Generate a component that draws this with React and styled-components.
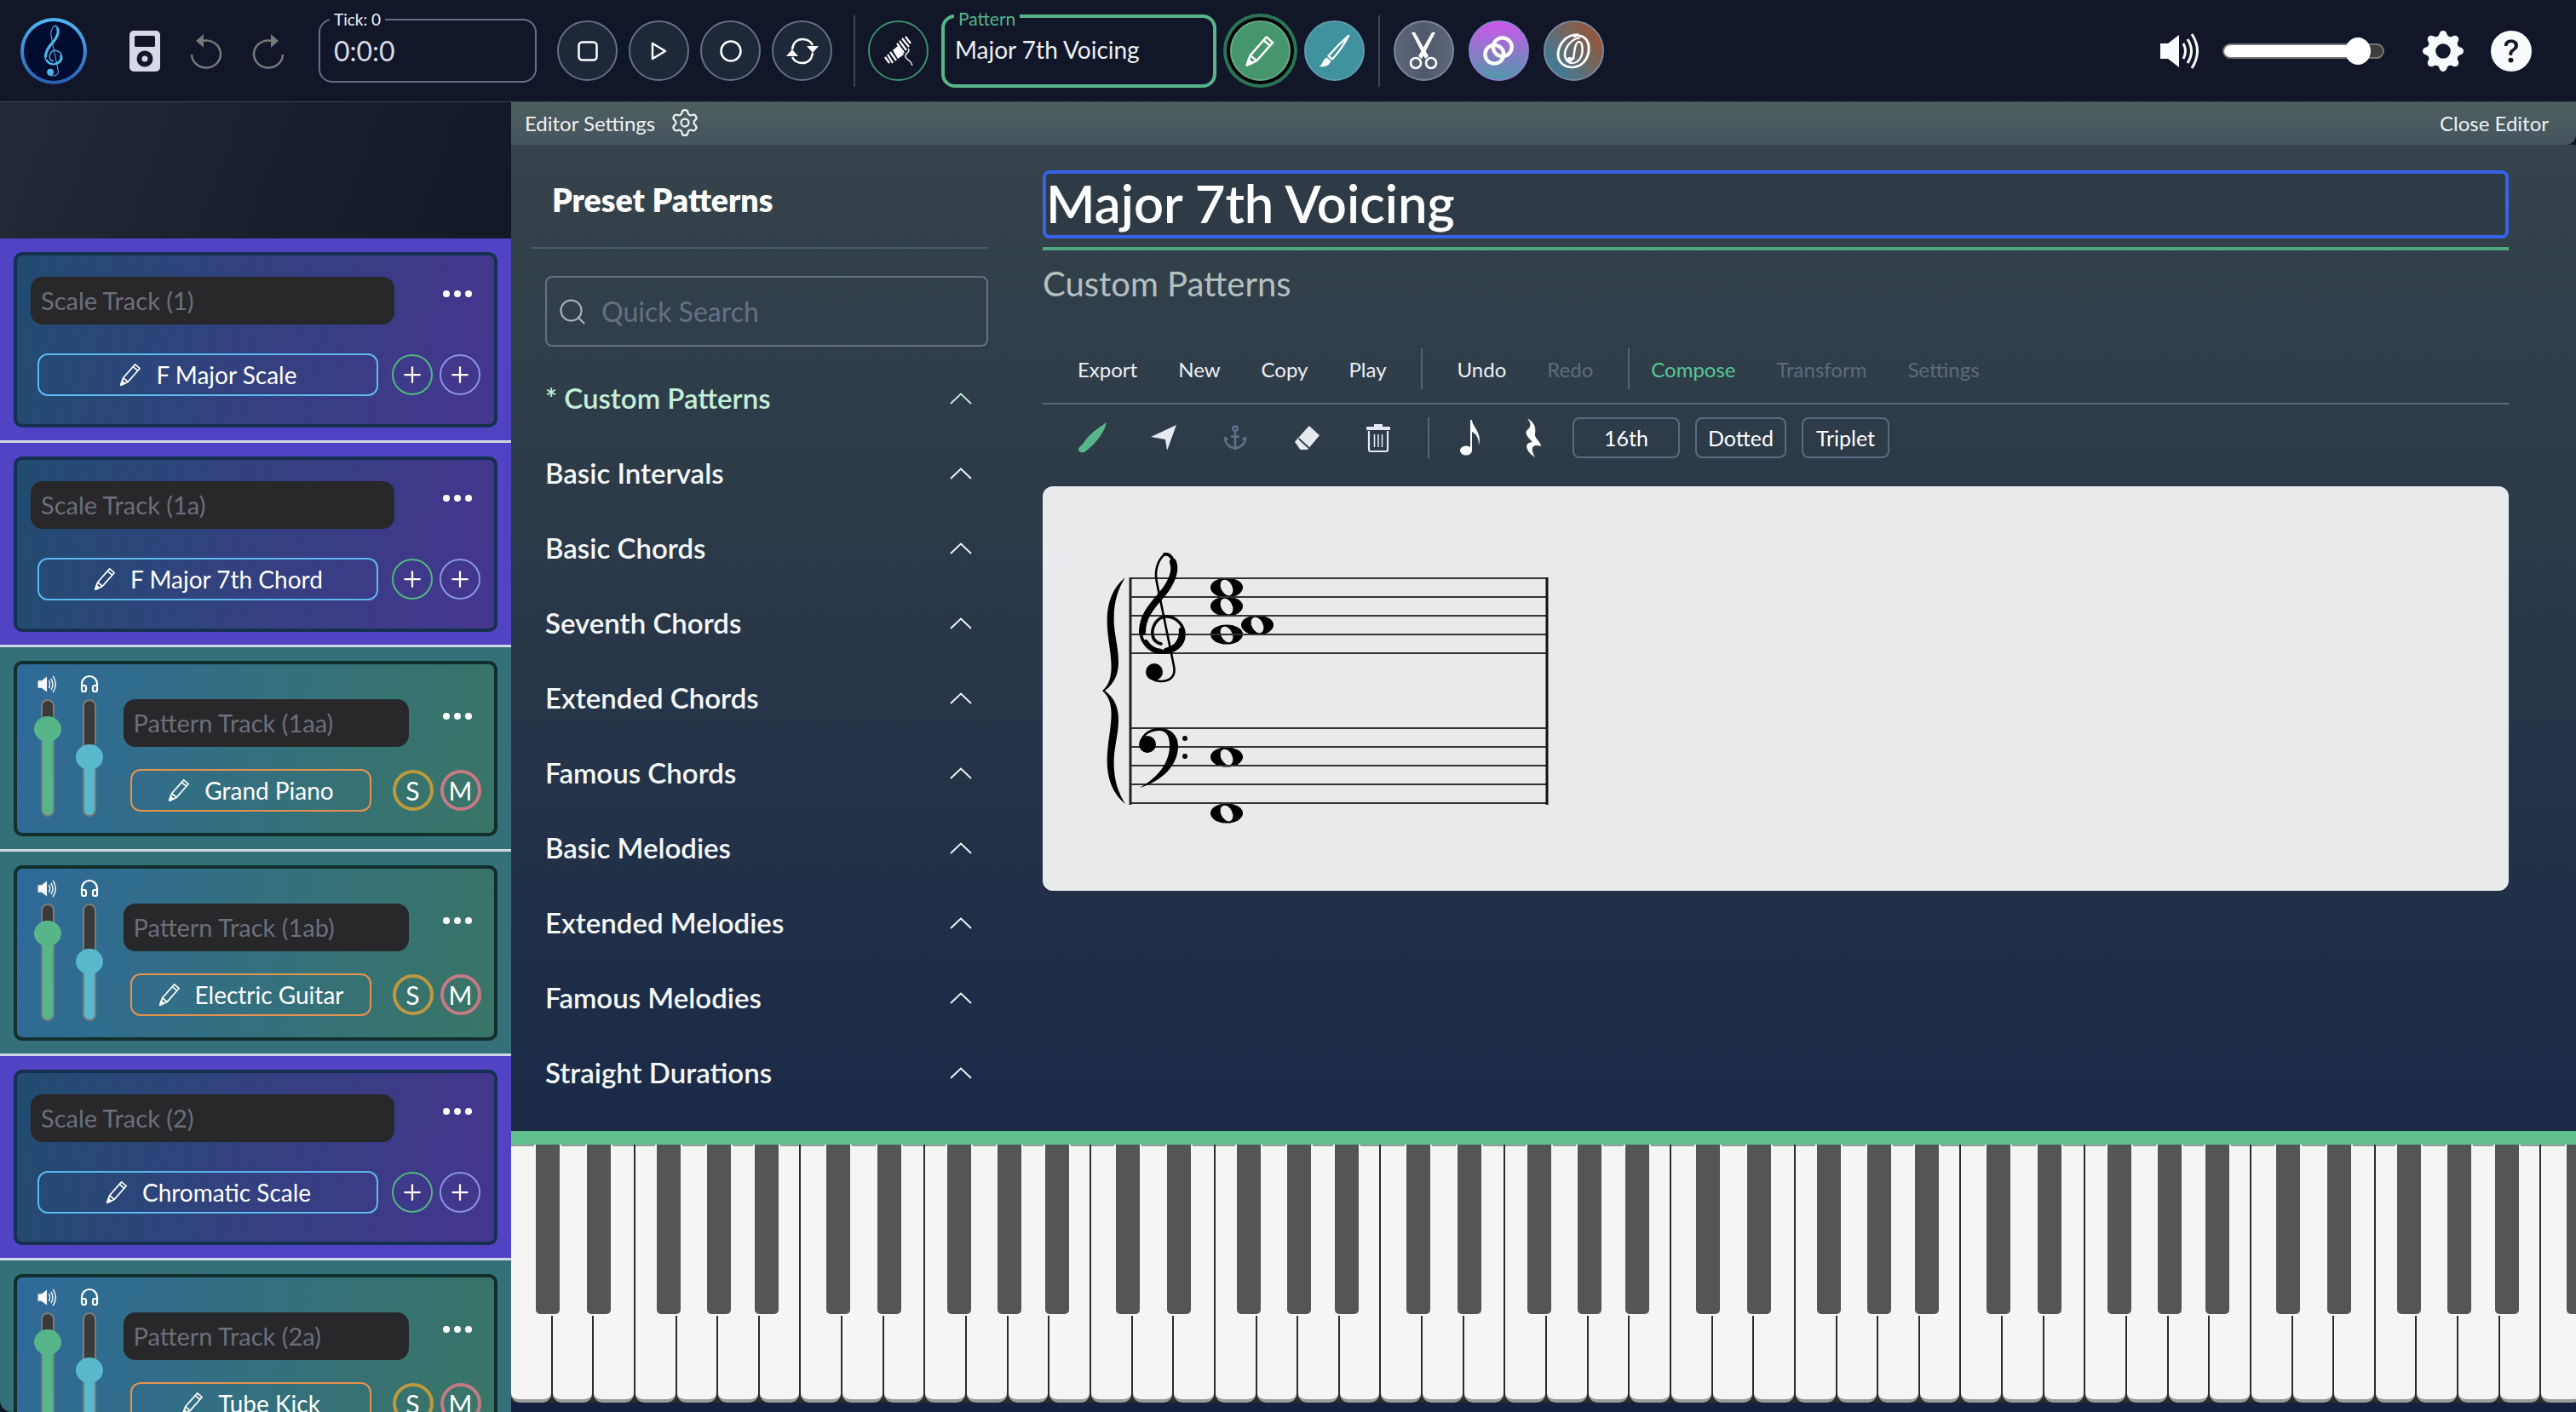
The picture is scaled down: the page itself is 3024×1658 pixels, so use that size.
import React from "react"
import styled, { createGlobalStyle } from "styled-components"
import { Search, Anchor, Plus, Headphones, Settings } from "lucide-react"
import { BsGearFill, BsQuestionCircleFill } from "react-icons/bs"

const GlobalStyle = createGlobalStyle`
	html, body { margin: 0; padding: 0; background: #111729; }
	* { box-sizing: border-box; }
	body { font-family: "Lato", "Noto Sans", sans-serif; color: #fff; }
`

const Page = styled.div`
	width: 3024px;
	height: 1658px;
	overflow: hidden;
	display: flex;
	flex-direction: column;
`

const TopBar = styled.header`
	height: 120px;
	flex: none;
	display: flex;
	align-items: center;
	padding: 0 52px 0 24px;
	background: #111729;
	border-bottom: 1px solid #3a4252;
`

const Group = styled.div`
	display: flex;
	align-items: center;
	gap: ${p => p.$gap || 0}px;
	margin-left: ${p => p.$left || 0}px;
`

const RightGroup = styled(Group)`
	margin-left: auto;
`

const BarDivider = styled.div`
	width: 2px;
	height: 84px;
	background: #3f4759;
	margin-left: ${p => p.$left}px;
`

const LogoBadge = styled.div`
	width: 78px;
	height: 78px;
	border-radius: 50%;
	padding: 4px;
	background: linear-gradient(180deg, #4fb8f5, #2a5fb0);
	flex: none;
	div {
		width: 100%;
		height: 100%;
		border-radius: 50%;
		background: #020b30;
		display: flex;
		align-items: center;
		justify-content: center;
	}
`

const FieldBox = styled.div`
	position: relative;
	width: ${p => p.$w}px;
	height: ${p => p.$h}px;
	margin-left: ${p => p.$left}px;
	border: ${p => (p.$active ? "4px solid #57b58a" : "2.5px solid #667085")};
	border-radius: 16px;
	padding-left: ${p => p.$pad}px;
	display: flex;
	align-items: center;
	background: #111729;
`

const FieldLabel = styled.span`
	position: absolute;
	left: 11px;
	top: ${p => (p.$active ? -10 : -12)}px;
	padding: 0 5px;
	background: #111729;
	font-size: ${p => (p.$active ? 21 : 19)}px;
	line-height: 22px;
	color: ${p => (p.$active ? "#57b58a" : "#eef0f4")};
`

const FieldValue = styled.span`
	font-size: ${p => p.$size}px;
	color: ${p => p.$color};
	margin-top: ${p => p.$up || 0}px;
`

const RoundButton = styled.div`
	width: 71px;
	height: 71px;
	flex: none;
	border-radius: 50%;
	display: flex;
	align-items: center;
	justify-content: center;
	margin-left: ${p => p.$left || 0}px;
	border: 2.5px solid ${p => p.$border || "#667085"};
	background: ${p => p.$bg || "#1d2939"};
	box-shadow: ${p => (p.$ring ? "0 0 0 4px #000, 0 0 0 8px #2b7557" : "none")};
`

const VolumeTrack = styled.div`
	position: relative;
	width: 190px;
	height: 18px;
	margin-left: 24px;
	border-radius: 9px;
	border: 2px solid #777;
	background: #3d3d3d;
	span {
		display: block;
		width: 160px;
		height: 100%;
		background: #fff;
		border-radius: 7px;
	}
	i {
		position: absolute;
		left: 142px;
		top: -9px;
		width: 30px;
		height: 32px;
		border-radius: 50%;
		background: #fff;
	}
`

const Body = styled.div`
	flex: 1;
	min-height: 0;
	display: flex;
`

const Sidebar = styled.aside`
	width: 600px;
	flex: none;
	overflow: hidden;
	border-bottom-left-radius: 14px;
`

const SidebarHead = styled.div`
	height: 160px;
	background: linear-gradient(110deg, #212a36, #131826);
`

const TrackWrap = styled.div`
	height: 240px;
	padding: 16px 16px 0;
	background: ${p => (p.$kind === "scale" ? "#5044c4" : "#347078")};
	border-bottom: 3px solid #cfd6e4;
`

const Card = styled.div`
	height: 206px;
	border-radius: 10px;
	border: 4px solid ${p => (p.$kind === "scale" ? "#16304f" : "#122f2d")};
	background: ${p =>
		p.$kind === "scale"
			? "linear-gradient(100deg, #224c70, #45358f)"
			: "linear-gradient(100deg, #2e6a98, #397565)"};
	display: flex;
	flex-direction: ${p => (p.$kind === "scale" ? "column" : "row")};
	padding: ${p => (p.$kind === "scale" ? "25px 0 0 16px" : "12px 0 0 20px")};
`

const NameRow = styled.div`
	display: flex;
	align-items: flex-start;
`

const NameBox = styled.div`
	width: ${p => p.$w}px;
	height: 56px;
	flex: none;
	border-radius: 14px;
	background: #28282b;
	color: #6c6f7a;
	font-size: 29px;
	display: flex;
	align-items: center;
	padding: 0 0 2px 12px;
`

const Dots = styled.div`
	display: flex;
	gap: 5px;
	margin: 16px 0 0 ${p => p.$left}px;
	i {
		width: 8px;
		height: 8px;
		border-radius: 50%;
		background: #fff;
	}
`

const ActionRow = styled.div`
	display: flex;
	align-items: center;
	margin: ${p => p.$top}px 0 0 ${p => p.$left}px;
`

const InstrumentButton = styled.div`
	width: ${p => p.$w}px;
	height: 50px;
	flex: none;
	display: flex;
	align-items: center;
	justify-content: center;
	gap: 16px;
	border-radius: 12px;
	border: 2.5px solid ${p => p.$border};
	font-size: 28px;
	color: #fff;
`

const SmallRound = styled.div`
	width: 48px;
	height: 48px;
	flex: none;
	border-radius: 50%;
	border: ${p => (p.$thick ? 4 : 2)}px solid ${p => p.$color};
	margin-left: ${p => p.$left}px;
	display: flex;
	align-items: center;
	justify-content: center;
	font-size: 30px;
	color: #fff;
`

const Mixer = styled.div`
	display: grid;
	grid-template-columns: 32px 32px;
	column-gap: 16.5px;
	justify-items: center;
	align-content: start;
	row-gap: 7px;
`

const MixIcon = styled.div`
	height: 22px;
	display: flex;
	align-items: center;
`

const VSlider = styled.div`
	position: relative;
	width: 16px;
	height: 138px;
	border-radius: 8px;
	border: 2px solid #7b7b7b;
	background: linear-gradient(180deg, #3a3a3a ${p => p.$at}%, ${p => p.$color} ${p => p.$at}%);
	i {
		position: absolute;
		left: -10px;
		width: 32px;
		height: 30px;
		border-radius: 50%;
		background: ${p => p.$color};
	}
`

const TrackMain = styled.div`
	margin: 29px 0 0 24px;
`

const Main = styled.main`
	flex: 1;
	min-width: 0;
	display: flex;
	flex-direction: column;
`

const EditorHeader = styled.div`
	height: 50px;
	flex: none;
	display: flex;
	align-items: center;
	justify-content: space-between;
	padding: 0 32px 2px 16px;
	background: linear-gradient(180deg, #4e5f5d, #46545f);
	border-bottom-right-radius: 12px;
	font-size: 24px;
	color: #eef1f1;
	position: relative;
	z-index: 1;
`

const HeaderLabel = styled.div`
	display: flex;
	align-items: center;
	gap: 17px;
`

const EditorBody = styled.div`
	height: 1158px;
	flex: none;
	display: flex;
	background: linear-gradient(180deg, #36434a, #1a2a47);
`

const PresetPanel = styled.section`
	width: 536px;
	flex: none;
	margin-left: 24px;
`

const PresetTitle = styled.h2`
	margin: 0;
	padding: 38px 0 28px 24px;
	font-size: 37.5px;
	line-height: 54px;
	font-weight: 800;
	color: #fff;
	border-bottom: 2px solid #4e5b6e;
`

const SearchBox = styled.div`
	height: 83px;
	margin: 32px 0 16px 16px;
	border: 2.5px solid #667085;
	border-radius: 8px;
	display: flex;
	align-items: center;
	gap: 16px;
	padding-left: 12px;
	font-size: 32px;
	color: #667085;
`

const AccordionRow = styled.div`
	height: 88px;
	display: flex;
	align-items: center;
	justify-content: space-between;
	padding: 0 19px 0 16px;
	font-size: 33px;
	font-weight: 600;
	color: ${p => (p.$active ? "#c4efd9" : "#f5f8f8")};
	svg { margin-top: 2px; }
`

const PatternPanel = styled.section`
	width: 1721px;
	flex: none;
	margin-left: 64px;
`

const TitleInput = styled.div`
	height: 80px;
	margin-top: 30px;
	border: 4px solid #3563e9;
	border-radius: 8px;
	font-size: 61.5px;
	font-weight: 600;
	line-height: 68px;
	color: #fff;
	background: #2e3b46;
`

const GreenRule = styled.div`
	height: 4px;
	margin-top: 10px;
	background: #4fa87d;
`

const SubTitle = styled.div`
	height: 50px;
	margin-top: 14px;
	font-size: 40px;
	line-height: 50px;
	color: #b4bfc0;
`

const MenuBar = styled.nav`
	height: 66px;
	margin-top: 51px;
	padding-left: 41px;
	display: flex;
	align-items: flex-start;
	border-bottom: 2px solid #5b6a80;
`

const MenuGroup = styled.div`
	height: 48px;
	display: flex;
	align-items: center;
	gap: 48px;
`

const MenuItem = styled.span`
	font-size: 24px;
	color: ${p => (p.$tone === "on" ? "#57c894" : p.$tone === "off" ? "#5d6a7d" : "#eef0f4")};
`

const ThinDivider = styled.div`
	width: 2px;
	height: 48px;
	background: #56647a;
	margin: 0 ${p => p.$right}px 0 ${p => p.$left}px;
`

const ToolBar = styled.div`
	height: 48px;
	margin-top: 15px;
	padding-left: 40px;
	display: flex;
	align-items: center;
`

const ToolSlot = styled.div`
	width: 36px;
	height: 40px;
	display: flex;
	align-items: center;
	justify-content: center;
`

const ToolGroup = styled.div`
	display: flex;
	align-items: center;
	gap: ${p => p.$gap}px;
	margin-left: ${p => p.$left || 0}px;
`

const ValueChip = styled.div`
	width: ${p => p.$w}px;
	height: 48px;
	border: 2.5px solid #5b6a80;
	border-radius: 8px;
	display: flex;
	align-items: center;
	justify-content: center;
	font-size: 25px;
	color: #fff;
`

const ScoreCard = styled.div`
	height: 475px;
	margin-top: 33px;
	border-radius: 12px;
	background: #e9eaec;
	padding: 69px 0 0 56px;
	svg { display: block; }
`

const Piano = styled.div`
	position: relative;
	flex: 1;
	min-height: 0;
	overflow: hidden;
	background: #13203f;
	border-top: 16px solid #62c08f;
`

const WhiteKeys = styled.div`
	display: flex;
	height: 303px;
	gap: 2px;
	background: #2c2c30;
`

const WhiteKey = styled.div`
	width: 46.65px;
	flex: none;
	background: #f5f5f3;
	border-top: 2px solid #999;
	border-bottom: 4px solid #9a9a9a;
	border-radius: 0 0 10px 10px;
`

const BlackKey = styled.div`
	position: absolute;
	top: 0;
	width: 28px;
	height: 199px;
	background: #555;
	border-radius: 0 0 5px 5px;
	box-shadow: 0 0 0 2px #f5f5f3;
	clip-path: inset(0 -3px -3px -3px);
`

const TrebleClef = ({ x = 0, y = 0, scale = 1, color = "#000" }) => (
	<g transform={`translate(${x} ${y}) scale(${scale})`} fill="none" stroke={color} strokeLinecap="round">
		<path strokeWidth="2.6" d="M30 1 C22 8 18 20 21 34 L41 132 C44 146 34 150 26 150 C18 150 12 146 12 140" />
		<circle cx="18" cy="139" r="10" fill={color} stroke="none" />
		<path strokeWidth="3.5" d="M26 106 C18 104 15 98 16 90 C18 80 25 74 32 74 C44 74 53 84 53 95 C53 108 42 116 28 116 C12 116 2 104 2 90" />
		<path strokeWidth="8" d="M4 92 C4 68 24 54 33 40 C40 29 43 18 40 10" />
		<path strokeWidth="4" d="M40 8 C38 3 34 0 30 1" />
		<path strokeWidth="6.5" d="M50 90 C51 100 46 111 32 114" />
		<path strokeWidth="6" d="M8 104 C12 111 18 114 26 115" />
	</g>
)

const LogoClef = () => (
	<svg width="22" height="60" viewBox="0 0 56 152"><TrebleClef color="#4db6ec" /></svg>
)

const IpodIcon = () => (
	<svg width="36" height="48" viewBox="0 0 36 48">
		<rect width="36" height="48" rx="5" fill="#d5dae6" />
		<rect x="6" y="6" width="24" height="13" rx="1.5" fill="#111729" />
		<circle cx="18" cy="33" r="9.5" fill="#111729" />
		<circle cx="18" cy="33" r="3.5" fill="#d5dae6" />
	</svg>
)

const UndoIcon = ({ flip }) => (
	<svg width="38" height="42" viewBox="0 0 38 42" style={flip ? { transform: "scaleX(-1)" } : undefined}>
		<path d="M15 9 A17 16 0 1 1 2 25" fill="none" stroke="#777" strokeWidth="2.5" />
		<path d="M7 9 L16 1 L16 17 Z" fill="#777" />
	</svg>
)

const StopIcon = () => (
	<svg width="24" height="24" viewBox="0 0 24 24">
		<rect x="1.5" y="1.5" width="21" height="21" rx="4" fill="none" stroke="#fff" strokeWidth="2.5" />
	</svg>
)

const PlayIcon = () => (
	<svg width="19" height="22" viewBox="0 0 19 22">
		<path d="M2 2 L17 11 L2 20 Z" fill="none" stroke="#fff" strokeWidth="2.5" strokeLinejoin="round" />
	</svg>
)

const RecordIcon = () => (
	<svg width="26" height="26" viewBox="0 0 26 26">
		<circle cx="13" cy="13" r="11.5" fill="none" stroke="#fff" strokeWidth="2.5" />
	</svg>
)

const LoopIcon = () => (
	<svg width="38" height="32" viewBox="0 0 38 32" fill="none" stroke="#fff" strokeWidth="2.5">
		<path d="M7 14 C8 6 13 2 19 2 C25 2 29 5 31 9" />
		<path d="M31 18 C30 26 25 30 19 30 C13 30 9 27 7 23" />
		<path d="M24 10 H38 L31 18 Z" fill="#fff" stroke="none" />
		<path d="M0 22 H14 L7 14 Z" fill="#fff" stroke="none" />
	</svg>
)

const YarnIcon = () => (
	<svg width="36" height="38" viewBox="0 0 36 36" fill="none" stroke="#fff">
		<g strokeWidth="2.2">
			<path d="M2 25 L7 32" />
			<path d="M5 22 L11 32" />
			<path d="M8 19 L15 29" />
			<path d="M16 9 L24 20" />
			<path d="M19 6 L27 17" />
			<path d="M22 3 L30 13" />
			<path d="M26 1 L32 9" />
		</g>
		<path d="M11 17 L17 27 L24 22 L17 12 Z" fill="#fff" stroke="none" />
		<path d="M29 15 C33 19 24 21 26 25 C28 29 32 28 34 35" strokeWidth="1.4" />
	</svg>
)

const PencilIcon = ({ size = 28, weight = 1.8 }) => (
	<svg width={size} height={size} viewBox="0 0 28 30" fill="none" stroke="#fff" strokeWidth={weight} strokeLinejoin="round">
		<path d="M2 28 L5 19 L20 2 L26 7 L11 24 Z" />
		<path d="M5 19 L11 24 M17.5 5 L23.5 10" />
		<path d="M2 28 L3.5 23 L7 26 Z" fill="#fff" />
	</svg>
)

const BrushIcon = () => (
	<svg width="38" height="40" viewBox="0 0 40 42" fill="none" stroke="#fff" strokeWidth="2.4" strokeLinejoin="round">
		<path d="M38 2 C33 12 26 22 18 31 L13 27 C21 18 30 9 38 2 Z" />
		<path d="M11 29 L16 33 C15 38 10 41 2 40 C7 37 5 32 11 29 Z" fill="#fff" stroke="none" />
	</svg>
)

const ScissorsIcon = () => (
	<svg width="36" height="44" viewBox="0 0 36 44" fill="none" stroke="#fff">
		<path d="M4 0 L8 0 L24 28 L20 31 Z" fill="#fff" stroke="none" />
		<path d="M32 0 L28 0 L12 28 L16 31 Z" fill="#fff" stroke="none" />
		<circle cx="9" cy="36" r="6" strokeWidth="2.6" />
		<circle cx="27" cy="36" r="6" strokeWidth="2.6" />
	</svg>
)

const RingsIcon = () => (
	<svg width="38" height="38" viewBox="0 0 40 40" fill="none" stroke="#fff" strokeWidth="4.5">
		<circle cx="15" cy="24" r="11.5" />
		<circle cx="25" cy="15" r="11.5" />
	</svg>
)

const SwirlIcon = () => (
	<svg width="42" height="44" viewBox="0 0 42 54" preserveAspectRatio="none" fill="none" stroke="#fff" strokeLinecap="round">
		<path strokeWidth="3" d="M26 3 C12 3 3 18 3 32 C3 44 12 52 22 50 C34 48 40 34 39 20 C38 8 30 2 22 6" />
		<path strokeWidth="2.5" d="M28 8 C18 10 11 22 11 32 C11 40 16 46 22 44 C30 41 33 30 31 18 C30 12 26 12 24 18 C22 24 22 32 21 38" />
		<circle cx="17" cy="39" r="3.5" fill="#fff" stroke="none" />
	</svg>
)

const SpeakerIcon = ({ w = 50, h = 44 }) => (
	<svg width={w} height={h} viewBox="0 0 50 44" fill="none" stroke="#f8fafc" strokeWidth="3">
		<path d="M1 13 H10 L23 3 V41 L10 31 H1 Z" fill="#f8fafc" stroke="none" />
		<path d="M28 13 Q33 22 28 31" />
		<path d="M33 8 Q42 22 33 36" />
		<path d="M38 2 Q51 22 38 42" />
	</svg>
)

const ChevronIcon = ({ color }) => (
	<svg width="26" height="14" viewBox="0 0 26 14">
		<path d="M1 13 L13 1.5 L25 13" fill="none" stroke={color} strokeWidth="1.8" />
	</svg>
)

const FeatherIcon = () => (
	<svg width="36" height="36" viewBox="0 0 36 36">
		<path d="M35 0 C33 10 24 24 9 35 C5 36 1 34 2 31 C3 28 6 27 8 24 C14 14 26 6 35 0 Z" fill="#57b58a" />
	</svg>
)

const ArrowIcon = () => (
	<svg width="31" height="30" viewBox="0 0 31 30">
		<path d="M30 0 L0 14 L17 17 L19 30 Z" fill="#e6e9f0" />
	</svg>
)

const EraserIcon = () => (
	<svg width="34" height="30" viewBox="0 0 34 32">
		<path d="M20 1 L33 13 L18 31 L9 31 L2 21 Z" fill="#e6e9f0" />
		<path d="M7 17 L20 29" stroke="#2e3b49" strokeWidth="2" />
	</svg>
)

const TrashIcon = () => (
	<svg width="30" height="34" viewBox="0 0 30 34" fill="none" stroke="#e6e9f0" strokeWidth="2.2">
		<rect x="10" y="1" width="10" height="3" fill="#e6e9f0" stroke="none" />
		<rect x="1" y="4" width="28" height="4" rx="1" fill="#e6e9f0" stroke="none" />
		<path d="M4 9 V31 Q4 33 6 33 H24 Q26 33 26 31 V9" />
		<path d="M10.5 13 V28 M15 13 V28 M19.5 13 V28" strokeWidth="1.6" />
	</svg>
)

const NoteIcon = () => (
	<svg width="26" height="42" viewBox="0 0 26 42">
		<ellipse cx="7" cy="36" rx="7" ry="5.5" fill="#fff" />
		<path d="M12 36 V0 H14 C14 8 26 14 22 30 C22 20 18 16 14 14 V36 Z" fill="#fff" />
	</svg>
)

const RestIcon = () => (
	<svg width="24" height="46" viewBox="0 0 24 46">
		<path d="M6 0 C18 8 15 14 15 20 C15 24 22 28 22 33 C13 30 8 34 15 46 C3 38 2 29 12 28 C4 20 2 16 8 12 C11 8 9 4 6 0 Z" fill="#fff" />
	</svg>
)

const WholeNote = ({ x, y }) => (
	<g>
		<ellipse cx={x} cy={y} rx="19" ry="11.5" fill="#000" />
		<ellipse cx={x} cy={y} rx="6.5" ry="10" transform={`rotate(-28 ${x} ${y})`} fill="#e9eaec" />
	</g>
)

const staffTop = [679, 701, 723, 745, 767]
const staffBottom = [855, 877, 899, 921, 943]

const Score = () => (
	<svg width="550" height="330" viewBox="1280 640 550 330">
		<path
			fill="#000"
			d="M1321 678 C1304 692 1298 712 1300 738 C1302 766 1312 796 1294 811 C1312 826 1302 856 1300 884 C1298 910 1304 930 1321 944 C1312 930 1306 912 1308 886 C1311 858 1322 830 1297 811 C1322 792 1311 764 1308 736 C1306 710 1312 692 1321 678 Z"
		/>
		<WholeNote x={1440} y={690} />
		<WholeNote x={1440} y={712} />
		<WholeNote x={1440} y={745} />
		<WholeNote x={1476} y={734} />
		<WholeNote x={1440} y={889} />
		<WholeNote x={1440} y={955} />
		{[...staffTop, ...staffBottom].map(y => (
			<line key={y} x1="1327" x2="1816" y1={y} y2={y} stroke="#333" strokeWidth="2" />
		))}
		<line x1="1327" x2="1327" y1="678" y2="945" stroke="#222" strokeWidth="3" />
		<line x1="1816" x2="1816" y1="678" y2="945" stroke="#111" strokeWidth="3" />
		<TrebleClef x={1337} y={650} />
		<path
			fill="#000"
			d="M1338 925 C1358 914 1373 896 1373 876 C1373 864 1369 858 1361 858 C1351 858 1343 863 1342 869 C1350 863 1356 871 1354 878 C1352 885 1342 885 1339 879 C1335 869 1344 855 1361 855 C1376 855 1383 865 1383 876 C1383 899 1364 917 1338 925 Z"
		/>
		<circle cx="1347" cy="874" r="10" fill="#000" />
		<circle cx="1391" cy="867" r="3" fill="#000" />
		<circle cx="1391" cy="888" r="3" fill="#000" />
	</svg>
)

const tracks = [
	{ kind: "scale", name: "Scale Track (1)", button: "F Major Scale" },
	{ kind: "scale", name: "Scale Track (1a)", button: "F Major 7th Chord" },
	{ kind: "pattern", name: "Pattern Track (1aa)", button: "Grand Piano" },
	{ kind: "pattern", name: "Pattern Track (1ab)", button: "Electric Guitar" },
	{ kind: "scale", name: "Scale Track (2)", button: "Chromatic Scale" },
	{ kind: "pattern", name: "Pattern Track (2a)", button: "Tube Kick" }
]

const sections = [
	"* Custom Patterns",
	"Basic Intervals",
	"Basic Chords",
	"Seventh Chords",
	"Extended Chords",
	"Famous Chords",
	"Basic Melodies",
	"Extended Melodies",
	"Famous Melodies",
	"Straight Durations"
]

const KEY_STEP = 48.65
const whiteKeys = Array.from({ length: 50 }, (_, i) => i)
const blackOffsets = { 1: -5.6, 2: 5.7, 4: -9.6, 5: 0.8, 6: 8.1 }
const blackKeys = whiteKeys
	.map(i => i + 1)
	.filter(b => blackOffsets[b % 7] !== undefined)
	.map(b => b * KEY_STEP + blackOffsets[b % 7] - 14)

const ThreeDots = ({ left }) => (
	<Dots $left={left}><i /><i /><i /></Dots>
)

const Track = ({ track }) => (
	<TrackWrap $kind={track.kind}>
		<Card $kind={track.kind}>
			{track.kind === "scale" ? (
				<>
					<NameRow>
						<NameBox $w={427}>{track.name}</NameBox>
						<ThreeDots left={57} />
					</NameRow>
					<ActionRow $top={34} $left={8}>
						<InstrumentButton $w={400} $border="#5cb8ef">
							<PencilIcon />
							{track.button}
						</InstrumentButton>
						<SmallRound $left={16} $color="#4fb87f"><Plus size={30} strokeWidth={1.8} /></SmallRound>
						<SmallRound $left={8} $color="#8a94e6"><Plus size={30} strokeWidth={1.8} /></SmallRound>
					</ActionRow>
				</>
			) : (
				<>
					<Mixer>
						<MixIcon><SpeakerIcon w={24} h={21} /></MixIcon>
						<MixIcon><Headphones size={24} strokeWidth={2.2} /></MixIcon>
						<VSlider $color="#57b58a" $at={25}><i style={{ top: 18 }} /></VSlider>
						<VSlider $color="#59b8c9" $at={50}><i style={{ top: 51 }} /></VSlider>
					</Mixer>
					<TrackMain>
						<NameRow>
							<NameBox $w={335}>{track.name}</NameBox>
							<ThreeDots left={40} />
						</NameRow>
						<ActionRow $top={26} $left={8}>
							<InstrumentButton $w={283} $border="#e8924f">
								<PencilIcon />
								{track.button}
							</InstrumentButton>
							<SmallRound $left={25} $thick $color="#bd9a3f">S</SmallRound>
							<SmallRound $left={8} $thick $color="#c77a85">M</SmallRound>
						</ActionRow>
					</TrackMain>
				</>
			)}
		</Card>
	</TrackWrap>
)

const App = () => (
	<Page>
		<GlobalStyle />
		<TopBar>
			<LogoBadge><div><LogoClef /></div></LogoBadge>
			<Group $left={50} $gap={35}>
				<IpodIcon />
				<UndoIcon />
				<UndoIcon flip />
			</Group>
			<FieldBox $w={256} $h={75} $left={40} $pad={16}>
				<FieldLabel>Tick: 0</FieldLabel>
				<FieldValue $size={32} $color="#d9dde5">0:0:0</FieldValue>
			</FieldBox>
			<Group $left={24} $gap={13}>
				<RoundButton><StopIcon /></RoundButton>
				<RoundButton><PlayIcon /></RoundButton>
				<RoundButton><RecordIcon /></RoundButton>
				<RoundButton><LoopIcon /></RoundButton>
			</Group>
			<BarDivider $left={25} />
			<RoundButton $left={15} $border="#3a8f6b" $bg="#111729"><YarnIcon /></RoundButton>
			<FieldBox $w={323} $h={86} $left={15} $pad={12} $active>
				<FieldLabel $active>Pattern</FieldLabel>
				<FieldValue $size={28} $color="#eef0f4" $up={-4}>Major 7th Voicing</FieldValue>
			</FieldBox>
			<RoundButton $left={15.5} $ring $border="#6aa88b" $bg="#45966c"><PencilIcon size={38} weight={2} /></RoundButton>
			<RoundButton $left={16} $border="#5d9cad" $bg="#41929f"><BrushIcon /></RoundButton>
			<BarDivider $left={16} />
			<Group $left={16} $gap={17}>
				<RoundButton $border="#7d8797" $bg="linear-gradient(90deg, #5d6779, #4f5a6c 50%, #5d6779)"><ScissorsIcon /></RoundButton>
				<RoundButton $border="#8d7fd0" $bg="linear-gradient(180deg, #cf56ec, #4f9aa6)"><RingsIcon /></RoundButton>
				<RoundButton $border="#7d8797" $bg="linear-gradient(50deg, #2b84ae, #a74f26)"><SwirlIcon /></RoundButton>
			</Group>
			<RightGroup>
				<SpeakerIcon />
				<VolumeTrack><span /><i /></VolumeTrack>
				<Group $left={45}><BsGearFill size={48} color="#f8fafc" /></Group>
				<Group $left={32}><BsQuestionCircleFill size={48} color="#f8fafc" /></Group>
			</RightGroup>
		</TopBar>
		<Body>
			<Sidebar>
				<SidebarHead />
				{tracks.map(t => <Track key={t.name} track={t} />)}
			</Sidebar>
			<Main>
				<EditorHeader>
					<HeaderLabel>
						Editor Settings
						<Settings size={36} strokeWidth={1.5} color="#eef1f1" />
					</HeaderLabel>
					<span>Close Editor</span>
				</EditorHeader>
				<EditorBody>
					<PresetPanel>
						<PresetTitle>Preset Patterns</PresetTitle>
						<SearchBox>
							<Search size={36} strokeWidth={1.5} color="#a9afb5" />
							Quick Search
						</SearchBox>
						{sections.map((s, i) => (
							<AccordionRow key={s} $active={i === 0}>
								{s}
								<ChevronIcon color={i === 0 ? "#c4efd9" : "#f5f8f8"} />
							</AccordionRow>
						))}
					</PresetPanel>
					<PatternPanel>
						<TitleInput>Major 7th Voicing</TitleInput>
						<GreenRule />
						<SubTitle>Custom Patterns</SubTitle>
						<MenuBar>
							<MenuGroup>
								<MenuItem>Export</MenuItem>
								<MenuItem>New</MenuItem>
								<MenuItem>Copy</MenuItem>
								<MenuItem>Play</MenuItem>
							</MenuGroup>
							<ThinDivider $left={40} $right={41} />
							<MenuGroup>
								<MenuItem>Undo</MenuItem>
								<MenuItem $tone="off">Redo</MenuItem>
							</MenuGroup>
							<ThinDivider $left={41} $right={25} />
							<MenuGroup>
								<MenuItem $tone="on">Compose</MenuItem>
								<MenuItem $tone="off">Transform</MenuItem>
								<MenuItem $tone="off">Settings</MenuItem>
							</MenuGroup>
						</MenuBar>
						<ToolBar>
							<ToolGroup $gap={48}>
								<ToolSlot><FeatherIcon /></ToolSlot>
								<ToolSlot><ArrowIcon /></ToolSlot>
								<ToolSlot><Anchor size={32} strokeWidth={2} color="#5f6d85" /></ToolSlot>
								<ToolSlot><EraserIcon /></ToolSlot>
								<ToolSlot><TrashIcon /></ToolSlot>
							</ToolGroup>
							<ThinDivider $left={40} $right={36} />
							<NoteIcon />
							<ToolGroup $left={47}><RestIcon /></ToolGroup>
							<ToolGroup $left={35} $gap={18}>
								<ValueChip $w={126}>16th</ValueChip>
								<ValueChip $w={107}>Dotted</ValueChip>
								<ValueChip $w={103}>Triplet</ValueChip>
							</ToolGroup>
						</ToolBar>
						<ScoreCard><Score /></ScoreCard>
					</PatternPanel>
				</EditorBody>
				<Piano>
					<WhiteKeys>
						{whiteKeys.map(k => <WhiteKey key={k} />)}
					</WhiteKeys>
					{blackKeys.map(left => <BlackKey key={left} style={{ left }} />)}
				</Piano>
			</Main>
		</Body>
	</Page>
)

export default App
